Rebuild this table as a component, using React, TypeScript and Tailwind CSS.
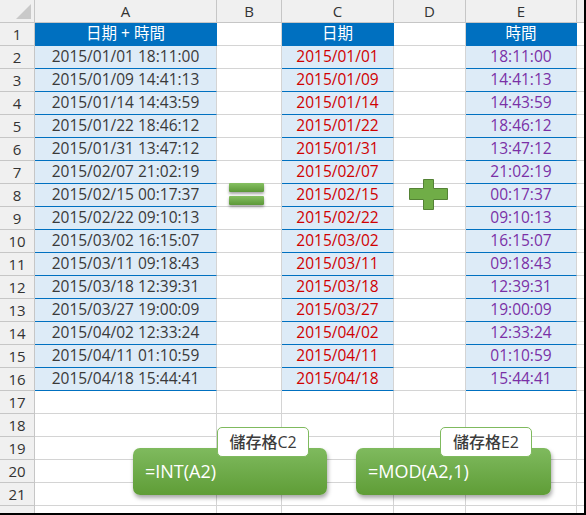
import React from "react";

const data: [string, string][] = [
  ["2015/01/01", "18:11:00"],
  ["2015/01/09", "14:41:13"],
  ["2015/01/14", "14:43:59"],
  ["2015/01/22", "18:46:12"],
  ["2015/01/31", "13:47:12"],
  ["2015/02/07", "21:02:19"],
  ["2015/02/15", "00:17:37"],
  ["2015/02/22", "09:10:13"],
  ["2015/03/02", "16:15:07"],
  ["2015/03/11", "09:18:43"],
  ["2015/03/18", "12:39:31"],
  ["2015/03/27", "19:00:09"],
  ["2015/04/02", "12:33:24"],
  ["2015/04/11", "01:10:59"],
  ["2015/04/18", "15:44:41"],
];

const font = { fontFamily: "'Open Sans', 'Noto Sans CJK TC', sans-serif" };

const hdr =
  "h-[23px] bg-[#f0f0f0] border-r border-b border-[#c6c6c6] flex items-center justify-center text-[15px] text-[#333]";
const rowHdr =
  "h-[23px] bg-[#f0f0f0] border-r border-b border-[#c6c6c6] flex items-center justify-center text-[15px] text-[#333]";
const plain = "h-[23px] bg-white border-r border-b border-[#d4d4d4]";
const blueHead =
  "h-[23px] bg-[#0070c0] border-r border-b border-[#0070c0] flex items-center justify-center text-[15.5px] text-white";
const dataCell =
  "h-[23px] bg-[#ddebf7] border-r border-[#d4d4d4] border-b border-b-[#0070c0] flex items-center justify-center text-[15.5px]";

export default function App() {
  const rows: React.ReactNode[] = [];
  rows.push(
    <div key="corner" className="h-[23px] bg-[#f0f0f0] border-r border-b border-[#c6c6c6] relative">
      <div className="absolute right-[3px] bottom-[3px] w-0 h-0 border-l-[15px] border-l-transparent border-b-[15px] border-b-[#c9c9c9]" />
    </div>
  );
  ["A", "B", "C", "D", "E"].forEach((c) =>
    rows.push(
      <div key={"h" + c} className={hdr}>
        {c}
      </div>
    )
  );
  rows.push(<div key="hX" className="h-[23px] bg-[#f0f0f0] border-b border-[#c6c6c6]" />);

  rows.push(
    <div key="r1" className={rowHdr}>
      1
    </div>
  );
  rows.push(
    <div key="r1a" className={blueHead}>
      日期 + 時間
    </div>
  );
  rows.push(<div key="r1b" className={plain} />);
  rows.push(
    <div key="r1c" className={blueHead}>
      日期
    </div>
  );
  rows.push(<div key="r1d" className={plain} />);
  rows.push(
    <div key="r1e" className={blueHead}>
      時間
    </div>
  );
  rows.push(<div key="r1x" className="h-[23px] bg-white border-b border-[#d4d4d4]" />);

  data.forEach(([d, t], i) => {
    const n = i + 2;
    rows.push(
      <div key={"r" + n} className={rowHdr}>
        {n}
      </div>
    );
    rows.push(
      <div key={"r" + n + "a"} className={dataCell + " text-[#3a3a3a]"}>
        {d} {t}
      </div>
    );
    rows.push(<div key={"r" + n + "b"} className={plain} />);
    rows.push(
      <div key={"r" + n + "c"} className={dataCell + " text-[#d00000]"}>
        {d}
      </div>
    );
    rows.push(<div key={"r" + n + "d"} className={plain} />);
    rows.push(
      <div key={"r" + n + "e"} className={dataCell + " text-[#7a30a6]"}>
        {t}
      </div>
    );
    rows.push(<div key={"r" + n + "x"} className="h-[23px] bg-white border-b border-[#d4d4d4]" />);
  });

  for (let n = 17; n <= 22; n++) {
    rows.push(
      <div key={"r" + n} className={rowHdr}>
        {n <= 21 ? n : ""}
      </div>
    );
    ["a", "b", "c", "d", "e"].forEach((c) =>
      rows.push(<div key={"r" + n + c} className={plain} />)
    );
    rows.push(<div key={"r" + n + "x"} className="h-[23px] bg-white border-b border-[#d4d4d4]" />);
  }

  return (
    <div
      className="w-[586px] h-[515px] overflow-hidden relative bg-white border-r-2 border-b-2 border-black"
      style={font}
    >
      <div className="grid grid-cols-[35px_182px_65px_112px_72px_111px_1fr]">{rows}</div>

      <div className="absolute left-[229px] top-[183px] flex flex-col gap-[4px]">
        <div className="w-[35px] h-[9px] bg-gradient-to-b from-[#86c062] to-[#5c9838] rounded-[1px] shadow-[0_2px_3px_rgba(0,0,0,0.35)]" />
        <div className="w-[35px] h-[9px] bg-gradient-to-b from-[#86c062] to-[#5c9838] rounded-[1px] shadow-[0_2px_3px_rgba(0,0,0,0.35)]" />
      </div>

      <svg className="absolute left-[408px] top-[178px]" width="41" height="33" viewBox="0 0 41 33">
        <path
          d="M15.5 1.5 H25.5 V10.5 H39.5 V21.5 H25.5 V31.5 H15.5 V21.5 H1.5 V10.5 H15.5 Z"
          fill="#70ad47"
          stroke="#548235"
          strokeWidth="1"
        />
      </svg>

      <div className="absolute left-[133px] top-[448px] w-[194px] h-[47px] rounded-[7px] bg-gradient-to-b from-[#7fba5e] to-[#5f9d36] shadow-[1px_3px_4px_rgba(0,0,0,0.35)] flex items-center pl-[12px] text-white text-[18px]">
        =INT(A2)
      </div>
      <div className="absolute left-[217px] top-[427px] w-[92px] h-[30px] rounded-[5px] bg-white border border-[#7fba5e] flex items-center justify-center text-[16px] text-[#3b3b3b] font-medium">
        儲存格C2
      </div>

      <div className="absolute left-[356px] top-[448px] w-[195px] h-[47px] rounded-[7px] bg-gradient-to-b from-[#7fba5e] to-[#5f9d36] shadow-[1px_3px_4px_rgba(0,0,0,0.35)] flex items-center pl-[12px] text-white text-[18px]">
        =MOD(A2,1)
      </div>
      <div className="absolute left-[440px] top-[427px] w-[92px] h-[30px] rounded-[5px] bg-white border border-[#7fba5e] flex items-center justify-center text-[16px] text-[#3b3b3b] font-medium">
        儲存格E2
      </div>
    </div>
  );
}
